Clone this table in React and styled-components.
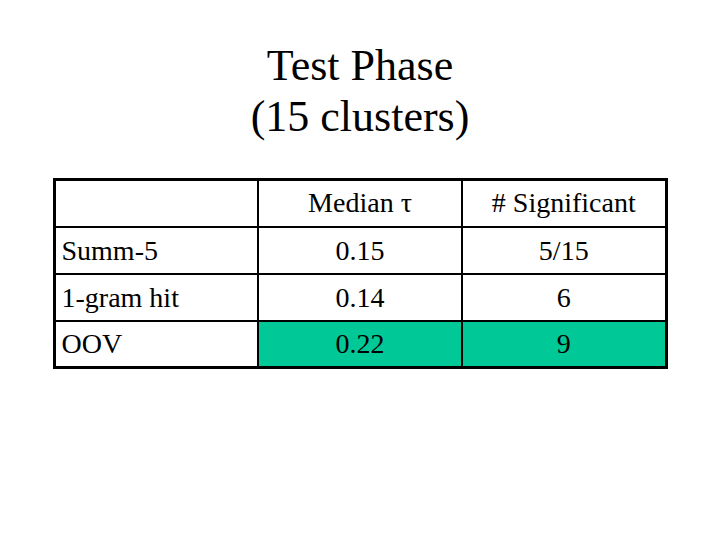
import React from "react";
import styled, { createGlobalStyle } from "styled-components";

const GlobalStyle = createGlobalStyle`
    body {
        margin: 0;
        background: #ffffff;
        font-family: "Liberation Serif", "Times New Roman", serif;
        color: #000000;
    }
`;

const rows = [
    { label: "Summ-5", median: "0.15", sig: "5/15" },
    { label: "1-gram hit", median: "0.14", sig: "6" },
    { label: "OOV", median: "0.22", sig: "9", highlight: true },
];

const App = () => {
    return (
        <>
        <GlobalStyle />
        <Slide>
            <Title>
                Test Phase
                <br />
                (15 clusters)
            </Title>
            <ResultsTable>
                <colgroup>
                    <col style={{ width: "204px" }} />
                    <col style={{ width: "204px" }} />
                    <col style={{ width: "204px" }} />
                </colgroup>
                <thead>
                    <tr>
                        <HeadCell />
                        <HeadCell>Median τ</HeadCell>
                        <HeadCell># Significant</HeadCell>
                    </tr>
                </thead>
                <tbody>
                    {rows.map((r) => (
                        <tr key={r.label}>
                            <LabelCell>{r.label}</LabelCell>
                            <ValueCell $highlight={r.highlight}>{r.median}</ValueCell>
                            <ValueCell $highlight={r.highlight}>{r.sig}</ValueCell>
                        </tr>
                    ))}
                </tbody>
            </ResultsTable>
        </Slide>
        </>
    );
};

export default App;

const Slide = styled.div`
    width: 720px;
    height: 540px;
    display: flex;
    flex-direction: column;
    align-items: center;
    padding-top: 40px;
    box-sizing: border-box;
`;

const Title = styled.h1`
    margin: 0;
    font-weight: normal;
    font-size: 44px;
    line-height: 51px;
    text-align: center;
`;

const ResultsTable = styled.table`
    margin-top: 36px;
    border-collapse: collapse;
    table-layout: fixed;
    width: 614px;
    border: 3px solid #000;
    font-size: 28px;

    td, th {
        border: 2px solid #000;
        height: 47px;
        padding: 0 6px;
        box-sizing: border-box;
        font-weight: normal;
        vertical-align: middle;
    }
`;

const HeadCell = styled.th`
    text-align: center;
    padding-top: 0 !important;
`;

const LabelCell = styled.td`
    text-align: left;
    padding-top: 1px !important;
`;

const ValueCell = styled.td`
    text-align: center;
    padding-top: 1px !important;
    background: ${(p) => (p.$highlight ? "#00c896" : "transparent")};
`;
